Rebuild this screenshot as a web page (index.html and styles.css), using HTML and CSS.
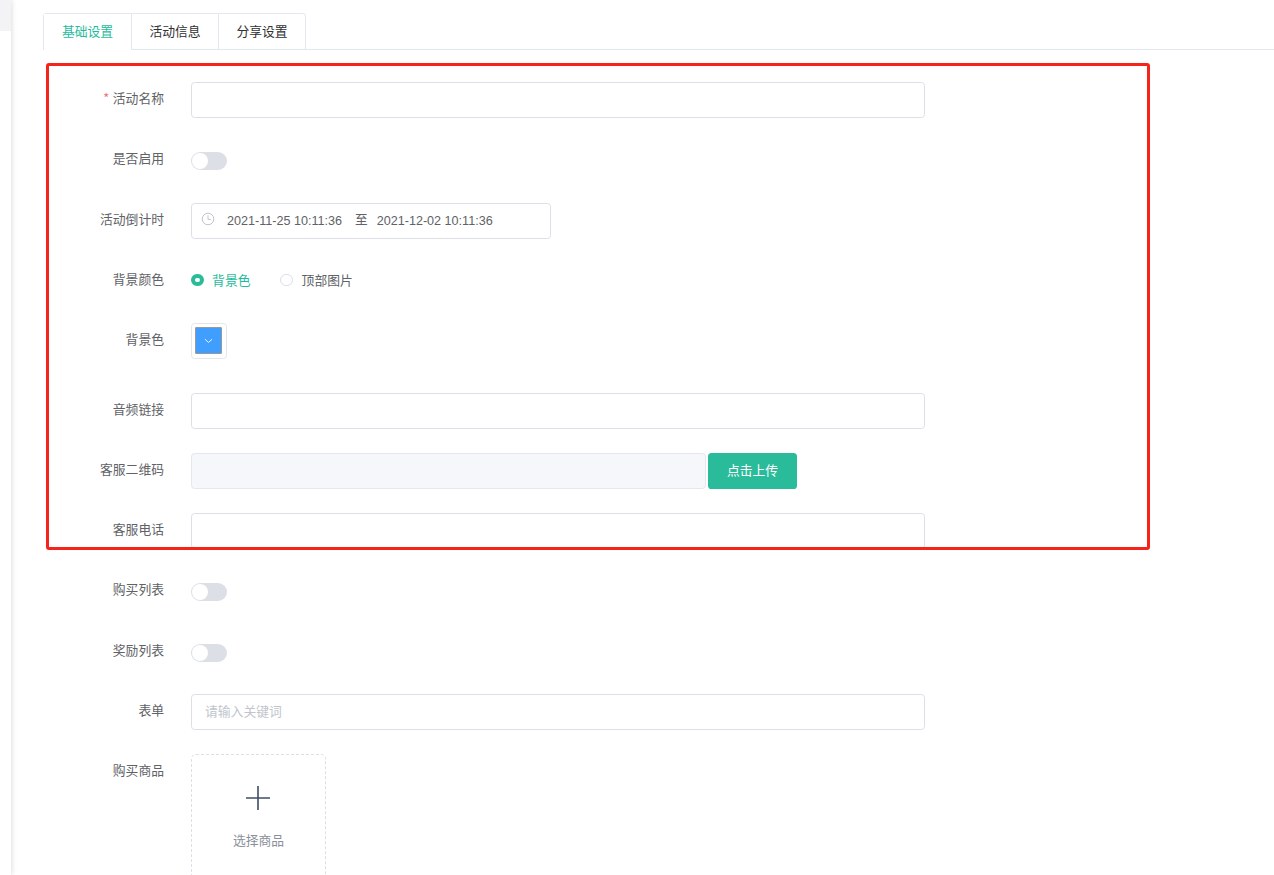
FILE: index.html
```html
<!DOCTYPE html>
<html lang="zh-CN">
<head>
<meta charset="utf-8">
<title>活动设置</title>
<link rel="stylesheet" href="styles.css">
</head>
<body>
<div class="page">
  <aside class="sidebar"><div class="sidebar-top"></div></aside>
  <main class="main">
    <nav class="tabs">
      <div class="tab-group">
        <div class="tab active">基础设置</div>
        <div class="tab">活动信息</div>
        <div class="tab">分享设置</div>
      </div>
    </nav>
    <form class="form">
      <div class="row"><label class="label"><span class="req">*</span>活动名称</label><div class="input"></div></div>
      <div class="row row-switch"><label class="label">是否启用</label><span class="switch"></span></div>
      <div class="row"><label class="label">活动倒计时</label>
        <div class="date">
          <svg class="clock" viewBox="0 0 14 14" width="14" height="14"><circle cx="7" cy="7" r="5.8" fill="none" stroke="#c0c4cc" stroke-width="1"/><path d="M7 3.4V7.4H10" fill="none" stroke="#c0c4cc" stroke-width="1"/></svg>
          <span class="date-v">2021-11-25 10:11:36</span><span class="date-s">至</span><span class="date-v">2021-12-02 10:11:36</span>
        </div>
      </div>
      <div class="row"><label class="label">背景颜色</label>
        <div class="radios">
          <span class="radio on"><i class="dot"></i>背景色</span>
          <span class="radio"><i class="dot"></i>顶部图片</span>
        </div>
      </div>
      <div class="row row-color"><label class="label">背景色</label>
        <div class="picker"><div class="swatch"><svg viewBox="0 0 10 6" width="9" height="6"><path d="M1 1L5 4.6L9 1" fill="none" stroke="#fff" stroke-width="1"/></svg></div></div>
      </div>
      <div class="row"><label class="label">音频链接</label><div class="input"></div></div>
      <div class="row"><label class="label">客服二维码</label><div class="input disabled"></div><button type="button" class="btn">点击上传</button></div>
      <div class="row"><label class="label">客服电话</label><div class="input"></div></div>
      <div class="row row-switch"><label class="label">购买列表</label><span class="switch"></span></div>
      <div class="row"><label class="label">奖励列表</label><span class="switch"></span></div>
      <div class="row"><label class="label">表单</label><div class="input placeholder">请输入关键词</div></div>
      <div class="row"><label class="label">购买商品</label>
        <div class="upload">
          <svg class="plus" viewBox="0 0 24 24" width="24" height="24"><path d="M12 0V24M0 12H24" stroke="#3f4d66" stroke-width="1.6" fill="none"/></svg>
          <span>选择商品</span>
        </div>
      </div>
    </form>
  </main>
  <div class="mark"></div>
</div>
</body>
</html>
```
FILE: styles.css
```css
* { box-sizing: border-box; }
html, body { margin: 0; height: 100%; background: #fff; overflow: hidden; }
body { font-family: "Noto Sans CJK SC", "Liberation Sans", sans-serif; font-size: 12.8px; color: #606266; }
.page { display: flex; height: 875px; position: relative; overflow: hidden; }
.sidebar { width: 11px; flex: none; background: #fff; box-shadow: 1px 0 5px rgba(0, 0, 0, .13); }
.sidebar-top { height: 31px; background: #f3f3f5; }
.main { flex: 1; padding: 13px 0 0 32px; min-width: 0; }
.tabs { border-bottom: 1px solid #e4e7ed; height: 37px; }
.tab-group { display: inline-flex; border: 1px solid #e4e7ed; border-bottom: 0; border-radius: 3.6px 3.6px 0 0; height: 37px; }
.tab { width: 87px; text-align: center; line-height: 33px; color: #303133; border-left: 1px solid #e4e7ed; height: 36px; border-bottom: 1px solid #e4e7ed; }
.tab:first-child { border-left: 0; }
.tab.active { color: #1fbc9c; border-bottom: 0; background: #fff; height: 37px; }
.form { padding-top: 32px; }
.row { display: flex; align-items: flex-start; height: 36px; margin-bottom: 24px; }
.row-switch { height: 37px; }
.row-color { height: 46px; }
.label { width: 121px; flex: none; margin-right: 27px; text-align: right; line-height: 32px; }
.req { color: #f56c6c; margin-right: 3.6px; }
.input { width: 734px; height: 36px; border: 1px solid #dcdfe6; border-radius: 3.6px; background: #fff; line-height: 32px; padding-left: 13px; }
.input.disabled { width: 515px; background: #f5f7fa; border-color: #e4e7ed; }
.input.placeholder { color: #c0c4cc; }
.btn { width: 89px; height: 36px; margin-left: 2px; border: 0; border-radius: 3.6px; background: #2abb9b; color: #fff; font: inherit; padding: 0 0 3px; }
.switch { display: block; position: relative; width: 36px; height: 18px; margin-top: 10px; border-radius: 9px; background: #dcdfe6; }
.switch::after { content: ""; position: absolute; left: 1px; top: 1px; width: 16px; height: 16px; border-radius: 50%; background: #fff; }
.date { width: 360px; height: 36px; border: 1px solid #dcdfe6; border-radius: 3.6px; display: flex; align-items: center; padding: 0 0 1px 9px; font-family: "Liberation Sans", "Noto Sans CJK SC", sans-serif; font-size: 12.6px; }
.clock { flex: none; margin: 0 12px 3px 0; }
.date-s { margin: 0 9px 0 13px; line-height: 14px; padding-bottom: 3px; font-family: "Noto Sans CJK SC", sans-serif; }
.radios { display: flex; align-items: center; height: 34px; gap: 30px; }
.radio { display: flex; align-items: center; line-height: 32px; height: 34px; }
.dot { width: 12.6px; height: 12.6px; border-radius: 50%; border: 1px solid #dcdfe6; margin-right: 8.5px; background: #fff; }
.radio.on { color: #1fbc9c; }
.radio.on .dot { border: 4px solid #2abb9b; }
.picker { width: 36px; height: 36px; border: 1px solid #e6e6e6; border-radius: 3.6px; padding: 3px; }
.swatch { width: 27px; height: 27px; background: #409eff; border: 1px solid #999; display: flex; align-items: center; justify-content: center; border-radius: 1px; }
.upload { width: 135px; height: 135px; border: 1px dashed #dcdfe6; border-radius: 5px; display: flex; flex-direction: column; align-items: center; color: #8a8f99; }
.plus { margin: 31px 1px 20px 0; }
.mark { position: absolute; left: 46px; top: 63px; width: 1104px; height: 487px; border: 3px solid #f5231a; border-radius: 3px; pointer-events: none; }
```
